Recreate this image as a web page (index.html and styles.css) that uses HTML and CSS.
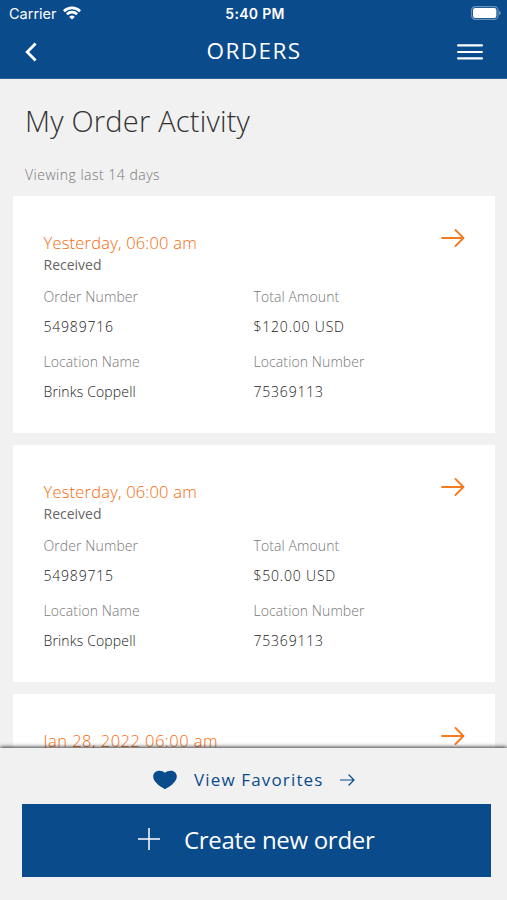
FILE: index.html
```html
<!DOCTYPE html>
<html lang="en">
<head>
    <meta charset="UTF-8">
    <meta name="viewport" content="width=device-width, initial-scale=1.0">
    <title>Orders</title>
    <link rel="stylesheet" href="styles.css">
</head>
<body>
    <div class="app">
        <header class="header">
            <div class="status-bar">
                <div class="carrier">
                    <span>Carrier</span>
                    <svg class="wifi" width="18" height="14" viewBox="0 0 18 14" fill="none" stroke="#fff" stroke-width="2.7">
                        <path d="M0.9 5.2a11.6 11.6 0 0 1 16.2 0M3.9 8.3a7.3 7.3 0 0 1 10.2 0"/>
                        <path d="M9 13.6L6.2 10.9a4 4 0 0 1 5.6 0z" fill="#fff" stroke="none"/>
                    </svg>
                </div>
                <div class="time">5:40 PM</div>
                <svg class="battery" width="30" height="14" viewBox="0 0 30 14">
                    <rect x="0.6" y="0.6" width="26.4" height="12.8" rx="3.8" fill="none" stroke="#fff" stroke-opacity="0.4" stroke-width="1.2"/>
                    <rect x="2" y="2" width="23.4" height="10" rx="2.2" fill="#fff"/>
                    <path d="M28.2 4.8v4.4q1.5-.7 1.5-2.2t-1.5-2.2z" fill="#fff" fill-opacity="0.5"/>
                </svg>
            </div>
            <nav class="nav-bar">
                <svg class="back" width="12" height="20" viewBox="0 0 12 20" fill="none" stroke="#fff" stroke-width="2.8">
                    <path d="M10.6 1.5L2.2 10l8.4 8.5"/>
                </svg>
                <h1 class="nav-title">ORDERS</h1>
                <svg class="menu" width="26" height="16" viewBox="0 0 26 16" stroke="#fff" stroke-width="2.2" stroke-linecap="round">
                    <path d="M1.1 1.4h23.8M1.1 8h23.8M1.1 14.4h23.8"/>
                </svg>
            </nav>
        </header>

        <main class="content">
            <h2 class="page-title">My Order Activity</h2>
            <p class="subtitle">Viewing last 14 days</p>

            <div class="orders">
                <div class="card">
                    <div class="card-top">
                        <div class="date">Yesterday, 06:00 am</div>
                        <svg class="arrow" width="24" height="18" viewBox="0 0 24 18"><path d="M1 9h21M14.5 1l8 8-8 8"/></svg>
                    </div>
                    <div class="status">Received</div>
                    <div class="details">
                        <div class="label">Order Number</div>
                        <div class="label">Total Amount</div>
                        <div class="value number">54989716</div>
                        <div class="value number">$120.00 USD</div>
                        <div class="label">Location Name</div>
                        <div class="label">Location Number</div>
                        <div class="value">Brinks Coppell</div>
                        <div class="value number">75369113</div>
                    </div>
                </div>

                <div class="card">
                    <div class="card-top">
                        <div class="date">Yesterday, 06:00 am</div>
                        <svg class="arrow" width="24" height="18" viewBox="0 0 24 18"><path d="M1 9h21M14.5 1l8 8-8 8"/></svg>
                    </div>
                    <div class="status">Received</div>
                    <div class="details">
                        <div class="label">Order Number</div>
                        <div class="label">Total Amount</div>
                        <div class="value number">54989715</div>
                        <div class="value number">$50.00 USD</div>
                        <div class="label">Location Name</div>
                        <div class="label">Location Number</div>
                        <div class="value">Brinks Coppell</div>
                        <div class="value number">75369113</div>
                    </div>
                </div>

                <div class="card">
                    <div class="card-top">
                        <div class="date full-date">Jan 28, 2022 06:00 am</div>
                        <svg class="arrow" width="24" height="18" viewBox="0 0 24 18"><path d="M1 9h21M14.5 1l8 8-8 8"/></svg>
                    </div>
                </div>
            </div>
        </main>

        <footer class="footer">
            <a class="favorites">
                <svg class="heart" width="24" height="20" viewBox="0 0 24 20" fill="#0a4b8c">
                    <path d="M12 19.2C8.6 17.6 0.2 12.4 0.2 6.6 0.2 3 2.8 0.7 6.2 0.7c2.5 0 4.500 0.700 5.800 2.100C13.300 1.400 15.300 0.700 17.800 0.700c3.400 0 6 2.300 6 5.900 0 5.800-8.400 11-11.800 12.600z"/>
                </svg>
                <span class="favorites-text">View Favorites</span>
                <svg class="small-arrow" width="15" height="12" viewBox="0 0 15 12"><path d="M0.5 6h13.5M9 1l5 5-5 5"/></svg>
            </a>
            <button class="create">
                <svg class="plus" width="22" height="22" viewBox="0 0 22 22" stroke="#fff" stroke-width="1.5"><path d="M11 0v22M0 11h22"/></svg>
                <span>Create new order</span>
            </button>
        </footer>
    </div>
</body>
</html>
```

FILE: styles.css
```css
* {
    box-sizing: border-box;
}

body {
    margin: 0;
    font-family: "Open Sans", "Noto Sans", sans-serif;
    background: #f1f1f1;
}

h1, h2, p {
    margin: 0;
}

svg {
    display: block;
    flex-shrink: 0;
}

.app {
    display: flex;
    flex-direction: column;
    height: 100vh;
    overflow: hidden;
}

/* header */
.header {
    height: 79px;
    flex-shrink: 0;
    background: #0a4b8c;
    border-bottom: 1px solid #2a639b;
    color: #fff;
}

.status-bar {
    display: grid;
    grid-template-columns: 1fr auto 1fr;
    align-items: center;
    height: 26px;
    padding: 0 6px 0 9px;
    font-family: Inter, sans-serif;
    font-size: 14.5px;
}

.carrier {
    display: flex;
    align-items: center;
    gap: 6px;
}

.time {
    font-size: 14px;
    font-weight: 600;
    letter-spacing: 0.3px;
}

.battery {
    justify-self: end;
}

.nav-bar {
    display: grid;
    grid-template-columns: 1fr auto 1fr;
    align-items: center;
    height: 51px;
    padding: 0 24px 0 25px;
}

.nav-title {
    font-size: 22.5px;
    font-weight: 400;
    line-height: 30px;
    letter-spacing: 1.4px;
    padding-bottom: 1px;
}

.menu {
    justify-self: end;
}

/* order list */
.content {
    flex: 1;
    min-height: 0;
    overflow: hidden;
}

.page-title {
    height: 84px;
    padding-left: 25px;
    font-size: 29px;
    font-weight: 300;
    line-height: 83px;
    letter-spacing: 0.2px;
    color: #333;
}

.subtitle {
    height: 33px;
    padding-left: 25px;
    font-size: 14px;
    font-weight: 300;
    line-height: 23px;
    letter-spacing: 0.5px;
    color: #777;
}

.orders {
    display: flex;
    flex-direction: column;
    gap: 12px;
    padding: 0 12px 0 13px;
}

.card {
    height: 237px;
    flex-shrink: 0;
    padding: 33px 30px 0 30.5px;
    background: #fff;
}

.card-top {
    display: flex;
    justify-content: space-between;
    height: 25px;
}

.date {
    font-size: 16.5px;
    font-weight: 300;
    line-height: 28px;
    letter-spacing: 0.2px;
    color: #f56a0a;
}

.full-date {
    letter-spacing: 0.47px;
}

.arrow,
.small-arrow {
    fill: none;
    stroke: #f47b20;
    stroke-width: 1.8;
    stroke-linecap: round;
    stroke-linejoin: round;
}

.status {
    font-size: 14px;
    font-weight: 400;
    line-height: 22px;
    color: #666;
}

.details {
    display: grid;
    grid-template-columns: 210px 1fr;
    grid-template-rows: 30px 35px 30px 30px;
    margin-top: 5px;
    font-size: 14px;
    line-height: 31px;
}

.label {
    font-weight: 300;
    letter-spacing: 0.1px;
    color: #777;
}

.value {
    font-weight: 300;
    letter-spacing: 0.15px;
    color: #222;
}

.number {
    letter-spacing: 0.8px;
}

/* bottom actions */
.footer {
    position: relative;
    height: 152px;
    flex-shrink: 0;
    padding: 0 16px 0 22px;
    background: #f1f1f1;
    box-shadow: 0 -1px 4px rgba(0, 0, 0, 0.8);
}

.favorites {
    display: flex;
    align-items: center;
    height: 56px;
    padding: 7px 0 0 131px;
    color: #0a4b8c;
}

.favorites-text {
    margin: 0 16px 0 17px;
    font-size: 17px;
    letter-spacing: 1.15px;
}

.small-arrow {
    stroke: #0a4b8c;
    stroke-width: 1.2;
}

.create {
    display: flex;
    align-items: center;
    gap: 24px;
    width: 469px;
    height: 73px;
    padding: 0 0 3px 116px;
    border: none;
    background: #0a4b8c;
    color: #fff;
    font-family: inherit;
    font-size: 24px;
    letter-spacing: -0.3px;
}
```
